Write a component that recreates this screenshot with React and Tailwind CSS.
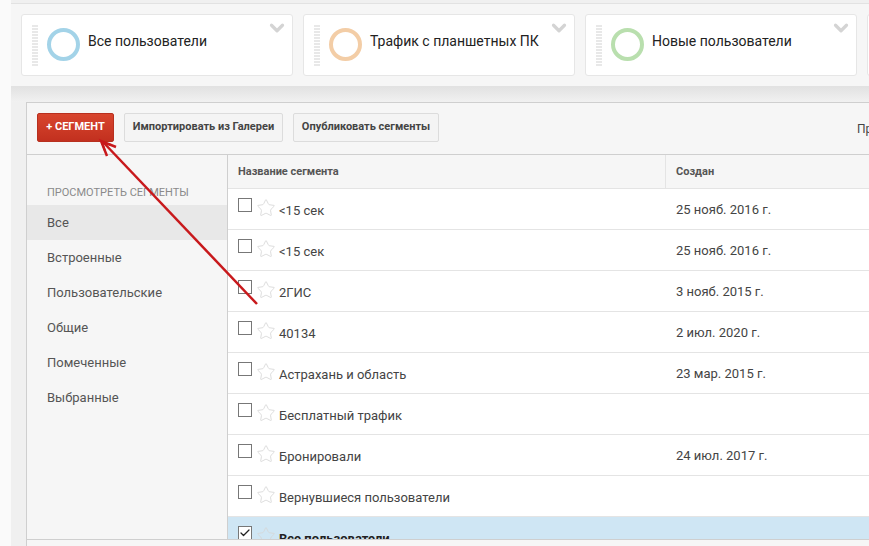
import { Check, ChevronDown, Star } from 'lucide-react';

const cards = [
  { label: 'Все пользователи', ring: 'border-[#a3d3e8]' },
  { label: 'Трафик с планшетных ПК', ring: 'border-[#f3cda6]' },
  { label: 'Новые пользователи', ring: 'border-[#b9dfae]' },
  { label: '', ring: '' },
];

const menu = ['Все', 'Встроенные', 'Пользовательские', 'Общие', 'Помеченные', 'Выбранные'];

const rows = [
  { name: '<15 сек', date: '25 нояб. 2016 г.' },
  { name: '<15 сек', date: '25 нояб. 2016 г.' },
  { name: '2ГИС', date: '3 нояб. 2015 г.' },
  { name: '40134', date: '2 июл. 2020 г.' },
  { name: 'Астрахань и область', date: '23 мар. 2015 г.' },
  { name: 'Бесплатный трафик', date: '' },
  { name: 'Бронировали', date: '24 июл. 2017 г.' },
  { name: 'Вернувшиеся пользователи', date: '' },
  { name: 'Все пользователи', date: '', selected: true },
];

function SegmentCard({ label, ring }) {
  return (
    <div className="relative flex h-[62px] w-[272px] shrink-0 rounded-[3px] border border-[#e6e6e6] bg-white">
      <div className="ml-[10px] mt-[10px] flex h-[43px] w-[6px] flex-col gap-[1px]">
        {Array.from({ length: 14 }).map((_, i) => (
          <div key={i} className="h-[2px] bg-[#e8e8e8]" />
        ))}
      </div>
      {ring && <div className={`ml-[9px] mt-[13px] h-[33px] w-[33px] rounded-full border-[4px] ${ring}`} />}
      <div className="ml-[8px] mt-[16px] text-[14px] leading-[20px] text-[#222]">{label}</div>
      <ChevronDown className="absolute right-[4px] top-[2px] h-[22px] w-[22px] text-[#d4d4d4]" strokeWidth={3.5} />
    </div>
  );
}

function Row({ name, date, selected }) {
  return (
    <div className={`flex h-[41px] shrink-0 border-b border-[#e4e4e4] ${selected ? 'bg-[#cfe6f4]' : 'bg-white'}`}>
      <div className="flex w-[438px] shrink-0 pl-[10px]">
        <div className="mt-[9px] flex h-[14px] w-[14px] items-center justify-center border border-[#777] bg-white">
          {selected && <Check className="h-[12px] w-[12px] text-[#222]" strokeWidth={2.5} />}
        </div>
        <Star className="ml-[4px] mt-[9px] h-[20px] w-[20px] text-[#d6d6d6]" strokeWidth={1} />
        <div className={`ml-[3px] mt-[12px] text-[13px] leading-[20px] ${selected ? 'font-bold text-[#222]' : 'text-[#444]'}`}>{name}</div>
      </div>
      <div className="pl-[10px] pt-[11px] text-[13px] leading-[20px] text-[#444]">{date}</div>
    </div>
  );
}

export default function App() {
  return (
    <div className="relative flex h-[546px] w-[869px] overflow-hidden bg-[#fafafa] font-['Roboto',sans-serif]">
      <div className="ml-[11px] flex min-w-0 flex-1 flex-col bg-[#f0f0f0] pt-[3px]">
        <div className="flex h-[84px] shrink-0 gap-[10px] border-y border-[#e2e2e2] bg-[#f6f6f6] pl-[10px] pt-[10px]">
          {cards.map((card, i) => (
            <SegmentCard key={i} {...card} />
          ))}
        </div>
        <div className="h-[15px] shrink-0 bg-gradient-to-b from-[#e2e2e2] to-[#f1f1f1]" />
        <div className="ml-[15px] flex min-h-0 flex-1 flex-col border-l border-t border-[#cfcfcf] bg-[#f6f6f6]">
          <div className="flex h-[52px] shrink-0 items-start gap-[10px] border-b border-[#cfcfcf] pl-[10px] pt-[10px]">
            <button className="h-[29px] w-[77px] shrink-0 rounded-[2px] border border-[#b8301f] bg-gradient-to-b from-[#d8452e] to-[#c2301f] text-[11px] font-bold text-white">+ СЕГМЕНТ</button>
            <button className="h-[29px] w-[159px] shrink-0 rounded-[2px] border border-[#dcdcdc] bg-[#f4f4f4] text-[11px] font-bold text-[#444]">Импортировать из Галереи</button>
            <button className="h-[29px] w-[146px] shrink-0 rounded-[2px] border border-[#dcdcdc] bg-[#f4f4f4] text-[11px] font-bold text-[#444]">Опубликовать сегменты</button>
            <div className="ml-[408px] mt-[7px] shrink-0 whitespace-nowrap text-[12px] text-[#444]">Пр</div>
          </div>
          <div className="flex min-h-0 flex-1">
            <div className="w-[201px] shrink-0 border-r border-[#cfcfcf]">
              <div className="pl-[20px] pt-[30px] text-[11px] leading-[15px] text-[#8a8a8a]">ПРОСМОТРЕТЬ СЕГМЕНТЫ</div>
              <div className="mt-[5px]">
                {menu.map((item, i) => (
                  <div key={item} className={`flex h-[35px] items-center pl-[20px] text-[13px] text-[#555] ${i === 0 ? 'bg-[#e8e8e8]' : ''}`}>{item}</div>
                ))}
              </div>
            </div>
            <div className="flex min-w-0 flex-1 flex-col overflow-hidden">
              <div className="flex h-[34px] shrink-0 border-b border-[#e4e4e4] text-[11px] font-bold text-[#555]">
                <div className="flex w-[438px] shrink-0 items-center border-r border-[#e4e4e4] pl-[10px] pt-[1px]">Название сегмента</div>
                <div className="flex items-center pl-[10px] pt-[1px]">Создан</div>
              </div>
              {rows.map((row, i) => (
                <Row key={i} {...row} />
              ))}
            </div>
          </div>
          <div className="h-[7px] shrink-0 border-t border-[#cfcfcf] bg-[#f6f6f6]" />
        </div>
      </div>
      <svg className="pointer-events-none absolute left-0 top-0" width="869" height="546" fill="none">
        <path d="M257 304 L103 142" stroke="#c8191c" strokeWidth="2.5" />
        <path d="M116 147 L101 141 L107 156" stroke="#c8191c" strokeWidth="2.5" />
        <path d="M111 145 L102 142 L105 151" stroke="#c8191c" strokeWidth="2" />
      </svg>
    </div>
  );
}
